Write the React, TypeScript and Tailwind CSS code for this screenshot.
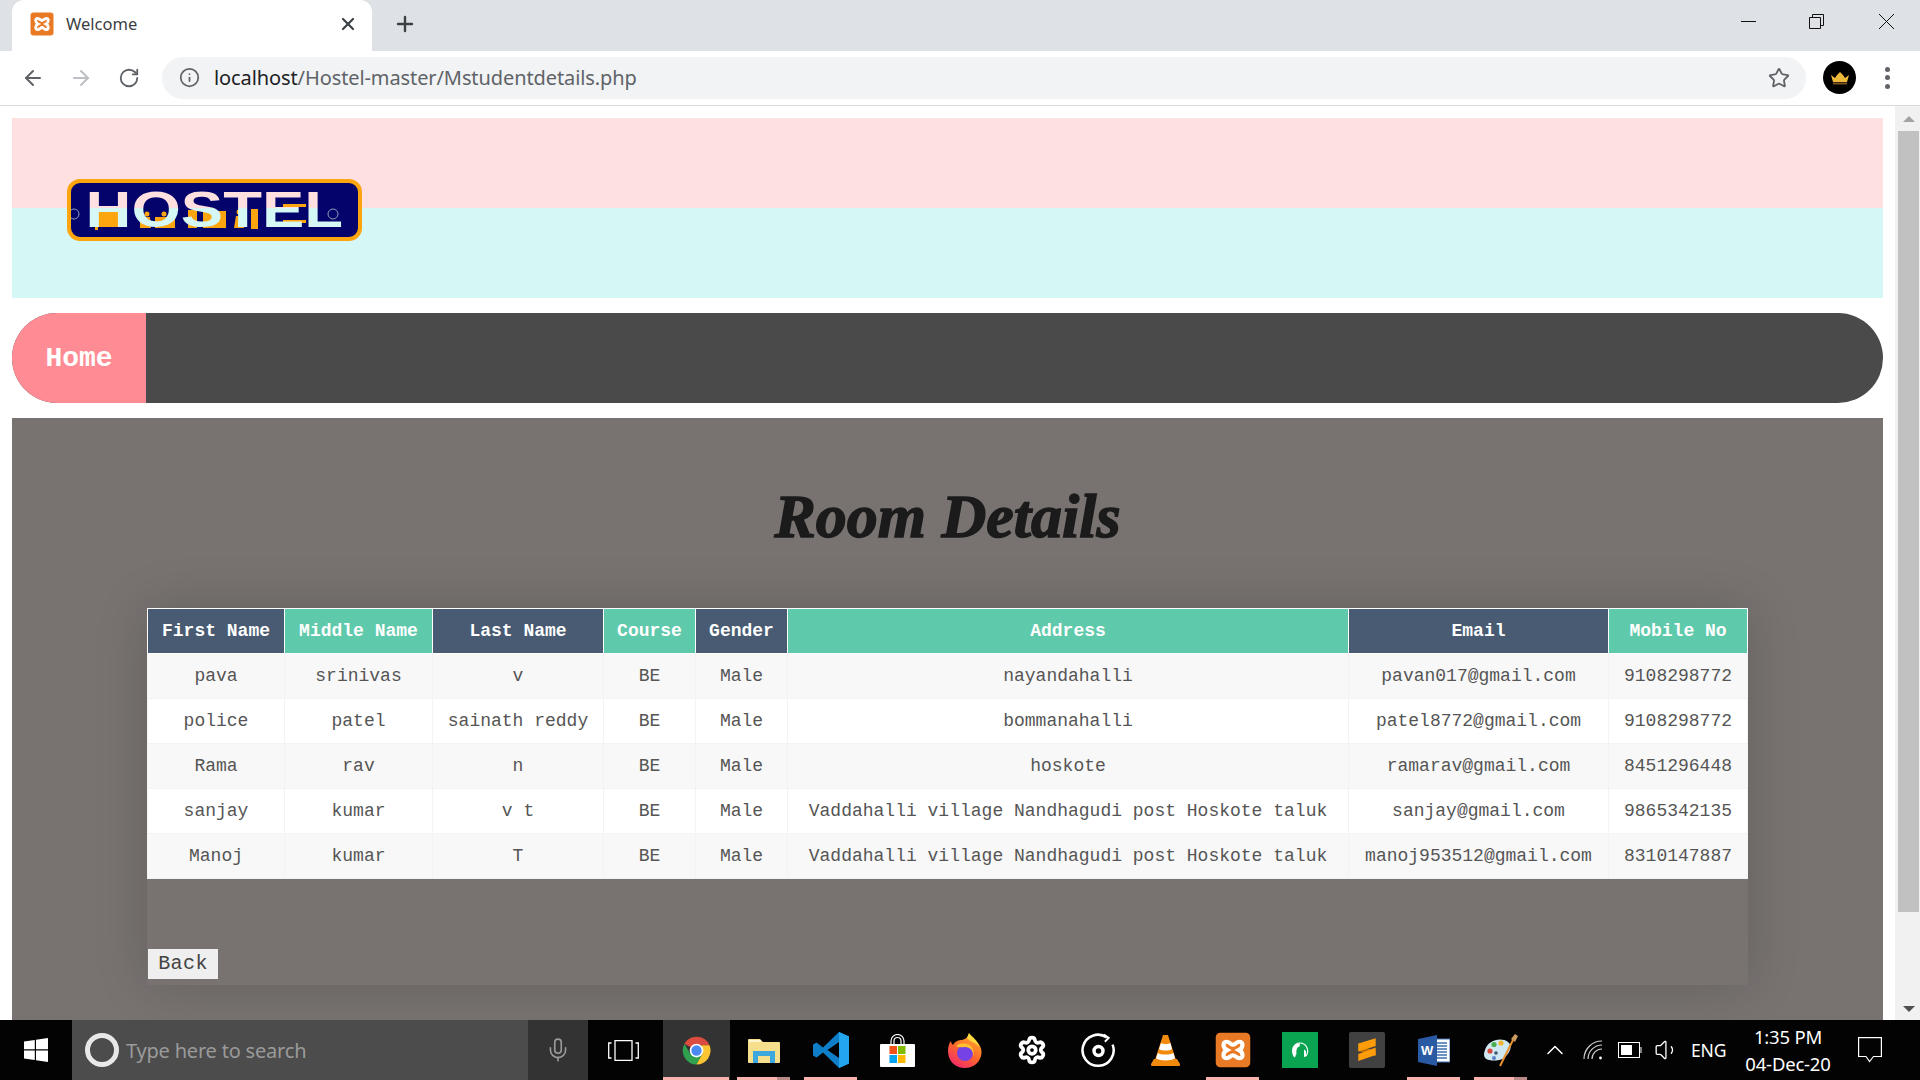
import { ArrowLeft, ArrowRight, RotateCw, Info, Star, X, Plus, Mic, ChevronUp, Settings, Volume1 } from "lucide-react";

const students = [
  ["pava", "srinivas", "v", "BE", "Male", "nayandahalli", "pavan017@gmail.com", "9108298772"],
  ["police", "patel", "sainath reddy", "BE", "Male", "bommanahalli", "patel8772@gmail.com", "9108298772"],
  ["Rama", "rav", "n", "BE", "Male", "hoskote", "ramarav@gmail.com", "8451296448"],
  ["sanjay", "kumar", "v t", "BE", "Male", "Vaddahalli village Nandhagudi post Hoskote taluk", "sanjay@gmail.com", "9865342135"],
  ["Manoj", "kumar", "T", "BE", "Male", "Vaddahalli village Nandhagudi post Hoskote taluk", "manoj953512@gmail.com", "8310147887"],
];

const columns = [
  { label: "First Name", width: "w-[137px]", bg: "bg-[#485b72]" },
  { label: "Middle Name", width: "w-[148px]", bg: "bg-[#5fc9ab]" },
  { label: "Last Name", width: "w-[171px]", bg: "bg-[#485b72]" },
  { label: "Course", width: "w-[92px]", bg: "bg-[#5fc9ab]" },
  { label: "Gender", width: "w-[92px]", bg: "bg-[#485b72]" },
  { label: "Address", width: "w-[561px]", bg: "bg-[#5fc9ab]" },
  { label: "Email", width: "w-[260px]", bg: "bg-[#485b72]" },
  { label: "Mobile No", width: "w-[139px]", bg: "bg-[#5fc9ab]" },
];

const XamppIcon = ({ className }: { className: string }) => (
  <svg viewBox="0 0 24 24" className={className}>
    <rect x="0.5" y="0.5" width="23" height="23" rx="3" fill="#e87a25" />
    <path
      d="M7.5 6.5C5 6.5 5 10.5 8 12C5 13.5 5 17.5 7.5 17.5C10 17.5 10.5 15.5 12 15.5C13.5 15.5 14 17.5 16.5 17.5C19 17.5 19 13.5 16 12C19 10.5 19 6.5 16.5 6.5C14 6.5 13.5 8.5 12 8.5C10.5 8.5 10 6.5 7.5 6.5Z"
      fill="#e87a25"
      stroke="#fff"
      strokeWidth="2.8"
    />
  </svg>
);

const ChromeIcon = () => (
  <svg viewBox="0 0 48 48" className="w-[33px] h-[33px]">
    <path d="M24 24L6.5 14A20.5 20.5 0 0 1 43 16.5H24Z" fill="#db4b3f" />
    <path d="M6.5 14A20.5 20.5 0 0 0 24 44.5L33 28L24 24L15 29Z" fill="#2fa14f" />
    <path d="M43 16.5A20.5 20.5 0 0 1 24 44.5L33 28L31 16.5Z" fill="#fbc534" />
    <circle cx="24" cy="24" r="10" fill="#fff" />
    <circle cx="24" cy="24" r="7.5" fill="#4b89f2" />
  </svg>
);

const ExplorerIcon = () => (
  <svg viewBox="0 0 32 25" className="w-[32px] h-[25px]">
    <path d="M0 2a1 1 0 0 1 1-1h11l3 3h16a1 1 0 0 1 1 1v19a1 1 0 0 1-1 1H1a1 1 0 0 1-1-1Z" fill="#f6df8c" />
    <rect x="1" y="2" width="12" height="2" fill="#fff6cf" />
    <path d="M5 25V13h22v12h-5v-7H10v7Z" fill="#3ba9dd" />
    <rect x="10" y="18" width="12" height="7" fill="#f6df8c" />
  </svg>
);

const VsCodeIcon = () => (
  <svg viewBox="0 0 36 36" className="w-[36px] h-[36px]">
    <path d="M26 0L36 4.5V31.5L26 36L10 20.5L3.5 25.5L0 23.5V12.5L3.5 10.5L10 15.5Z" fill="#0f7ec9" />
    <path d="M26 0L36 4.5V31.5L26 36V25L26 9.5Z" fill="#24a6ef" />
    <path d="M26 10L14.5 18L26 26Z" fill="#000" />
  </svg>
);

const StoreIcon = () => (
  <svg viewBox="0 0 35 33" className="w-[35px] h-[33px]">
    <path d="M11 11V7a6.5 6.5 0 0 1 13 0v4M14 11V7a3.5 3.5 0 0 1 7 0v4" fill="none" stroke="#fff" strokeWidth="1.2" />
    <rect y="10" width="35" height="23" rx="1" fill="#fff" />
    <rect x="9.5" y="12" width="7.5" height="8" fill="#f1511b" />
    <rect x="18" y="12" width="7.5" height="8" fill="#80bb01" />
    <rect x="9.5" y="21" width="7.5" height="8" fill="#02a4ef" />
    <rect x="18" y="21" width="7.5" height="8" fill="#ffb902" />
  </svg>
);

const FirefoxIcon = () => (
  <svg viewBox="0 0 34 35" className="w-[34px] h-[35px]">
    <defs>
      <linearGradient id="ff" x1="0.8" y1="0" x2="0.2" y2="1">
        <stop offset="0" stopColor="#ffb52c" />
        <stop offset="0.5" stopColor="#ff6a2b" />
        <stop offset="1" stopColor="#f0246e" />
      </linearGradient>
    </defs>
    <path d="M21 0C20 5 26 6 30 10C34 15 34 20 33 23C31 31 24 35 17 35C7 35 0 28 0 18C0 14 1 10 3 8C3 10 4 11 5 12C7 8 11 7 14 7C18 6 20 4 21 0Z" fill="url(#ff)" />
    <circle cx="17" cy="20" r="8" fill="#7542e5" />
    <path d="M8 13C12 9 19 10 23 13C26 16 26 21 25 24C26 18 22 14 17 14C13 14 11 15 8 13Z" fill="#ffbd2f" />
    <path d="M21 0C24 4 30 7 31 14C28 9 22 9 19 5Z" fill="#ffd93f" />
  </svg>
);

const GrooveIcon = () => (
  <svg viewBox="0 0 37 36" className="w-[37px] h-[35px]" fill="none" stroke="#fff">
    <path d="M27 4.5A16 16 0 1 0 33 12" strokeWidth="2.6" />
    <path d="M24 1.5L29 5L25 9" strokeWidth="2" />
    <circle cx="18.5" cy="18.5" r="4.6" strokeWidth="3.6" />
  </svg>
);

const VlcIcon = () => (
  <svg viewBox="0 0 29 32" className="w-[29px] h-[32px]">
    <path d="M3 25H26L29 30A1.5 1.5 0 0 1 27.5 32H1.5A1.5 1.5 0 0 1 0 30Z" fill="#f28a0e" />
    <path d="M12 1H17L25 26C20 29 9 29 4 26Z" fill="#f28a0e" />
    <path d="M10 9C12 10.5 17 10.5 19.5 9L21 15C18 17 11 17 8 15Z" fill="#fff" />
    <path d="M6.8 19C10 21 19 21 22.5 19L24 24.5C19 27 10 27 5 24.5Z" fill="#fff" />
  </svg>
);

const GreenIcon = () => (
  <svg viewBox="0 0 36 36" className="w-[36px] h-[36px]">
    <rect width="36" height="36" fill="#0aa351" />
    <path d="M13 25C8 18 12 11 18 11C24 11 28 18 24 24" fill="none" stroke="#fff" strokeWidth="1.2" />
    <path d="M11 15C13 12 16 11 18 11.5L17.5 14.5C15 15 14 18 14.5 22L12.5 25.5C10 23 10 18 11 15Z" fill="#fff" />
    <path d="M22 17.5L24 19V24.5L22 25Z" fill="#fff" />
  </svg>
);

const SublimeIcon = () => (
  <svg viewBox="0 0 36 36" className="w-[36px] h-[36px]">
    <rect width="36" height="36" rx="2" fill="#414141" />
    <path d="M9.3 13L26.7 19V24L9.3 19Z" fill="#b86f06" />
    <path d="M9.3 11.5L26.7 6.3V14L9.3 19.5Z" fill="#ff9c0a" />
    <path d="M9.3 22L26.7 15.5V23L9.3 29Z" fill="#ff9c0a" />
  </svg>
);

const WordIcon = () => (
  <svg viewBox="0 0 32 31" className="w-[32px] h-[31px]">
    <rect x="12" y="4" width="20" height="23" fill="#fff" stroke="#3c6db0" strokeWidth="1" />
    <path d="M19 8h10M19 11h10M19 14h10M19 17h10M19 20h10M19 23h10" stroke="#3c6db0" strokeWidth="1.4" />
    <path d="M0 4L19 0V31L0 27Z" fill="#2b5aa5" />
    <text x="3" y="20" fontSize="13" fontWeight="700" fill="#fff" fontFamily="Liberation Sans, sans-serif">W</text>
  </svg>
);

const PaintIcon = () => (
  <svg viewBox="0 0 35 33" className="w-[35px] h-[33px]">
    <path d="M2 16C5 6 18 3 25 8C30 12 27 18 23 22C19 27 12 27 6 26C1 25 0 21 2 16Z" fill="#cfe8f2" />
    <circle cx="7" cy="17" r="2.6" fill="#d9483b" />
    <circle cx="11" cy="10.5" r="2.6" fill="#4cae50" />
    <circle cx="18" cy="9" r="2.6" fill="#f2b632" />
    <circle cx="13" cy="19" r="1.8" fill="#40566e" />
    <circle cx="11" cy="24" r="2" fill="#5b82c4" />
    <path d="M31 4L17 32" stroke="#e8912f" strokeWidth="2" />
    <path d="M28 5L32 0L35 2L32 8Z" fill="#c99a5e" />
  </svg>
);

const TaskbarSlot = ({ children, active, underline, half }: { children: React.ReactNode; active?: boolean; underline?: boolean; half?: boolean }) => (
  <div className={`relative w-[67px] h-full flex items-center justify-center ${active ? "bg-[#333333]" : ""}`}>
    {children}
    {underline && (
      <div className={`absolute bottom-0 h-[3px] flex ${active ? "left-0 right-[1px]" : "left-[7px] right-[7px]"}`}>
        <div className="flex-1 bg-[#f9b3ae]" />
        {half && <div className="w-[13px] bg-[#b98a87]" />}
      </div>
    )}
  </div>
);

export default function App() {
  return (
    <div className="w-[1920px] h-[1080px] flex flex-col overflow-hidden bg-white [font-family:'Noto_Sans',sans-serif]">
      {/* browser tabs */}
      <div className="h-[51px] bg-[#dee1e6] flex items-end pl-[12px]">
        <div className="w-[360px] h-[51px] bg-white rounded-t-[12px] flex items-center pl-[18px] pr-[14px] pb-[3px]">
          <XamppIcon className="w-[24px] h-[24px]" />
          <span className="ml-[12px] text-[16.5px] text-[#3c4043] flex-1">Welcome</span>
          <X size={20} strokeWidth={2.6} className="text-[#3c4043]" />
        </div>
        <div className="h-[51px] pl-[21px] pb-[3px] flex items-center">
          <Plus size={24} strokeWidth={2.4} className="text-[#3c4043]" />
        </div>
        <div className="flex-1 h-full flex items-center justify-end pb-[8px]">
          <svg viewBox="0 0 15 1" className="w-[15px] h-[1px] mr-[53px]"><rect width="15" height="1" fill="#111" /></svg>
          <svg viewBox="0 0 15 15" className="w-[15px] h-[15px] mr-[55px]" fill="none" stroke="#111"><path d="M0.5 3.5h11v11h-11zM3.5 3.5v-3h11v11h-3" /></svg>
          <svg viewBox="0 0 15 15" className="w-[15px] h-[15px] mr-[26px]" fill="none" stroke="#111"><path d="M0 0L15 15M15 0L0 15" /></svg>
        </div>
      </div>

      {/* address bar */}
      <div className="h-[55px] bg-white border-b border-[#d9d9d9] flex items-center pb-[1px]">
        <ArrowLeft size={24} strokeWidth={2} className="ml-[21px] text-[#5f6368]" />
        <ArrowRight size={24} strokeWidth={2} className="ml-[24px] text-[#bcbfc3]" />
        <RotateCw size={22} strokeWidth={2} className="ml-[25px] text-[#5f6368]" />
        <div className="ml-[22px] w-[1644px] h-[42px] rounded-full bg-[#f1f3f4] flex items-center pl-[17px] pr-[16px]">
          <Info size={21} strokeWidth={2} className="text-[#5f6368]" />
          <span className="ml-[14px] text-[20px] tracking-[-0.1px] text-[#5f6368] flex-1">
            <span className="text-[#202124]">localhost</span>/Hostel-master/Mstudentdetails.php
          </span>
          <Star size={22} strokeWidth={2} className="text-[#5f6368]" />
        </div>
        <div className="ml-[17px] w-[33px] h-[33px] rounded-full bg-black flex items-center justify-center">
          <svg viewBox="0 0 20 14" className="w-[20px] h-[14px]">
            <path d="M1 4L5 7L7 4L10 1L13 4L15 7L19 4L17 11H3Z" fill="#eeb93a" />
            <rect x="3" y="11.5" width="14" height="2" fill="#7a5520" />
          </svg>
        </div>
        <div className="ml-[29px] flex flex-col gap-[3.5px]">
          <div className="w-[5px] h-[5px] rounded-full bg-[#5f6368]" />
          <div className="w-[5px] h-[5px] rounded-full bg-[#5f6368]" />
          <div className="w-[5px] h-[5px] rounded-full bg-[#5f6368]" />
        </div>
      </div>

      {/* page */}
      <div className="flex-1 min-h-0 flex">
        <div className="flex-1 min-w-0 pt-[12px] px-[12px] flex flex-col gap-[15px]">
          <div className="h-[180px] shrink-0 pl-[55px] pt-[61px] bg-[linear-gradient(#ffe0e1_50%,#d5f7f6_50%)]">
            <div className="relative w-[295px] h-[62px] rounded-[13px] border-[4px] border-[#fda50f] bg-[#03036b] blur-[0.4px] overflow-hidden">
              <svg viewBox="0 0 287 54" className="absolute inset-0 w-[287px] h-[54px]">
                <rect x="24" y="25" width="3" height="22" fill="#fda50f" />
                <rect x="27" y="27" width="20" height="17" fill="#fda50f" />
                <rect x="69" y="38" width="4" height="7" fill="#fda50f" />
                <circle cx="76" cy="31" r="2.5" fill="#fda50f" />
                <path d="M73 34h6l1 11h-8Z" fill="#fda50f" />
                <rect x="84" y="34" width="20" height="11" fill="#fda50f" />
                <circle cx="93" cy="31" r="2.5" fill="#fda50f" />
                <rect x="117" y="27" width="9" height="18" fill="#fda50f" />
                <rect x="132" y="28" width="23" height="17" fill="#fda50f" />
                <circle cx="168" cy="29" r="2.5" fill="#fda50f" />
                <path d="M165 33h6l2 12h-10Z" fill="#fda50f" />
                <rect x="180" y="26" width="7" height="20" fill="#fda50f" />
                <rect x="212" y="21" width="23" height="3" fill="#fda50f" />
                <rect x="212" y="37" width="23" height="3" fill="#fda50f" />
                <circle cx="3" cy="31" r="5" fill="none" stroke="#8ea0b8" strokeWidth="1" />
                <circle cx="262" cy="31" r="5" fill="none" stroke="#8ea0b8" strokeWidth="1" />
              </svg>
              <div className="relative h-full w-full flex items-center justify-center">
                <span className="scale-x-[1.27] h-[54px] leading-[54px] text-[50px] font-semibold text-transparent bg-clip-text bg-[linear-gradient(#ffe0e1_25px,#d5f7f6_25px)] [font-family:'Liberation_Sans',sans-serif]">
                  HOSTEL
                </span>
              </div>
            </div>
          </div>

          <nav className="h-[90px] shrink-0 rounded-[45px] bg-[#4a4a4a] overflow-hidden flex">
            <a className="w-[134px] pt-[2px] bg-[#ff8b94] text-white text-[28px] font-bold flex items-center justify-center [font-family:'Liberation_Mono',monospace]">
              Home
            </a>
          </nav>

          <main className="flex-1 min-h-0 bg-[#787371] overflow-hidden [font-family:'Liberation_Mono',monospace]">
            <h1 className="pt-[49px] h-[190px] text-center text-[62px] leading-[98px] font-bold italic text-[#1b1b1b] [font-family:'Liberation_Serif',serif] [-webkit-text-stroke:1.5px_#1b1b1b]">
              Room Details
            </h1>
            <div className="mx-[135px] h-[377px] flex flex-col justify-between shadow-[0_0_50px_rgba(0,0,0,0.16)]">
              <table className="w-[1600px] table-fixed border-collapse text-[18px]">
                <thead>
                  <tr className="h-[45px]">
                    {columns.map((c) => (
                      <th key={c.label} className={`${c.width} ${c.bg} p-0 pt-[1px] border border-white text-white text-center font-bold`}>
                        {c.label}
                      </th>
                    ))}
                  </tr>
                </thead>
                <tbody>
                  {students.map((row, i) => (
                    <tr key={row[0]} className={`h-[45px] ${i % 2 === 0 ? "bg-[#f8f8f8]" : "bg-white"}`}>
                      {row.map((cell, j) => (
                        <td key={j} className="p-0 pt-[1px] border border-[#f3f3f3] text-center text-[#555555] whitespace-nowrap">
                          {cell}
                        </td>
                      ))}
                    </tr>
                  ))}
                </tbody>
              </table>
              <button className="self-start ml-[1px] mb-[6px] w-[70px] h-[30px] bg-[#efefef] text-[#444444] text-[20px] tracking-[0.4px]">Back</button>
            </div>
          </main>
        </div>

        {/* scrollbar */}
        <div className="w-[25px] shrink-0 bg-[#f1f1f1] pl-[2px] flex flex-col items-center">
          <div className="h-[25px] flex items-center justify-center">
            <div className="w-0 h-0 border-x-[6px] border-x-transparent border-b-[6px] border-b-[#a3a3a3]" />
          </div>
          <div className="w-[21px] h-[781px] bg-[#c1c1c1]" />
          <div className="flex-1 flex items-end pb-[8px]">
            <div className="w-0 h-0 border-x-[6px] border-x-transparent border-t-[6px] border-t-[#505050]" />
          </div>
        </div>
      </div>

      {/* windows taskbar */}
      <div className="h-[60px] shrink-0 bg-[#030303] flex items-center text-white">
        <div className="w-[72px] h-full flex items-center justify-center">
          <svg viewBox="0 0 24 24" className="w-[24px] h-[24px]" fill="#fff">
            <path d="M0 3.5L10.8 2V11.3H0ZM12 1.8L24 0V11.3H12ZM0 12.6H10.8V22L0 20.5ZM12 12.6H24V24L12 22.2Z" />
          </svg>
        </div>
        <div className="w-[456px] h-full bg-[#4c4c4c] flex items-center pl-[13px]">
          <div className="w-[34px] h-[34px] rounded-full border-[5px] border-[#e8e8e8]" />
          <span className="ml-[7px] pt-[2px] text-[20px] tracking-[-0.2px] text-[#9a9a9a]">Type here to search</span>
        </div>
        <div className="w-[60px] h-full bg-[#333333] flex items-center justify-center">
          <Mic size={26} strokeWidth={1.5} className="text-[#9a9a9a]" />
        </div>
        <div className="w-[75px] h-full pr-[4px] flex items-center justify-center">
          <svg viewBox="0 0 31 21" className="w-[31px] h-[21px]" fill="none" stroke="#fff" strokeWidth="1.3">
            <path d="M7 0.7H24V20.3H7ZM3.5 3H0.7V18H3.5M27.5 3H30.3V18H27.5" />
          </svg>
        </div>
        <TaskbarSlot active underline><ChromeIcon /></TaskbarSlot>
        <TaskbarSlot underline half><ExplorerIcon /></TaskbarSlot>
        <TaskbarSlot underline><VsCodeIcon /></TaskbarSlot>
        <TaskbarSlot><StoreIcon /></TaskbarSlot>
        <TaskbarSlot><FirefoxIcon /></TaskbarSlot>
        <TaskbarSlot><Settings size={30} strokeWidth={3} /></TaskbarSlot>
        <TaskbarSlot><GrooveIcon /></TaskbarSlot>
        <TaskbarSlot><VlcIcon /></TaskbarSlot>
        <TaskbarSlot underline><XamppIcon className="w-[36px] h-[36px]" /></TaskbarSlot>
        <TaskbarSlot><GreenIcon /></TaskbarSlot>
        <TaskbarSlot><SublimeIcon /></TaskbarSlot>
        <TaskbarSlot underline><WordIcon /></TaskbarSlot>
        <TaskbarSlot underline half><PaintIcon /></TaskbarSlot>

        <div className="flex-1 h-full flex items-center pl-[7px]">
          <ChevronUp size={28} strokeWidth={1.3} />
          <svg viewBox="0 0 20 20" className="ml-[14px] w-[20px] h-[20px]" fill="none" stroke="#cfcfcf" strokeWidth="1.2">
            <path d="M1 19A18 18 0 0 1 19 1M5 19A14 14 0 0 1 19 5M9 19A10 10 0 0 1 19 9" />
            <circle cx="17.5" cy="18" r="1.4" fill="#fff" stroke="none" />
          </svg>
          <svg viewBox="0 0 24 16" className="ml-[15px] w-[24px] h-[16px]" fill="none" stroke="#fff">
            <rect x="0.5" y="0.5" width="21" height="15" />
            <rect x="3" y="3" width="11" height="10" fill="#fff" stroke="none" />
            <rect x="22.5" y="5" width="1" height="6" fill="#fff" stroke="none" />
          </svg>
          <Volume1 size={26} strokeWidth={1.2} className="ml-[12px]" />
          <span className="ml-[11px] text-[17.5px] tracking-[-0.2px] w-[38px]">ENG</span>
          <div className="w-[112px] ml-[3px] flex flex-col items-center leading-[27px] text-[18.5px] tracking-[-0.2px]">
            <span>1:35 PM</span>
            <span>04-Dec-20</span>
          </div>
          <svg viewBox="0 0 24 26" className="ml-[14px] w-[24px] h-[26px]" fill="none" stroke="#fff" strokeWidth="1.2">
            <path d="M0.6 0.6H23.4V19.5H15.5L11.5 24.5L8 19.5H0.6Z" />
          </svg>
        </div>
      </div>
    </div>
  );
}
